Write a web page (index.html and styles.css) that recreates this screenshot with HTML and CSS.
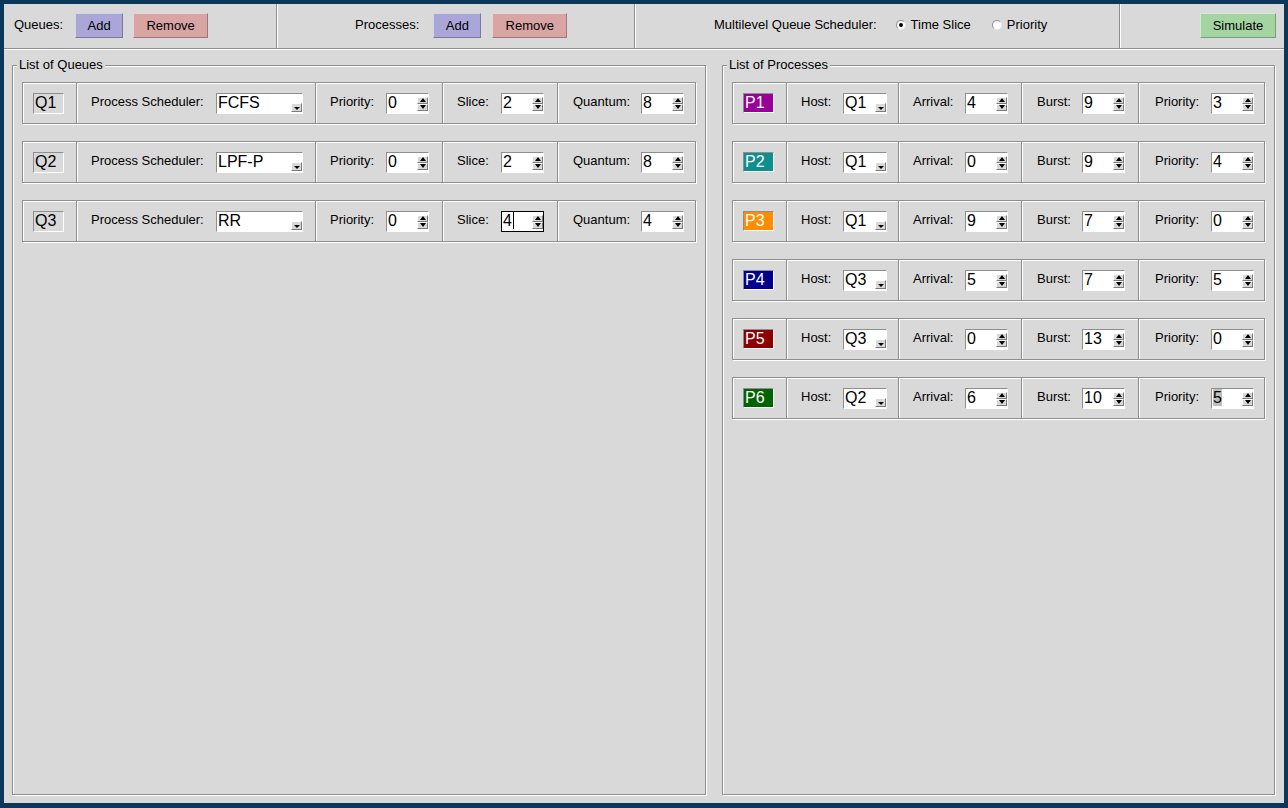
FILE: index.html
```html
<!DOCTYPE html>
<html>
<head>
<meta charset="utf-8">
<title>Multilevel Queue Scheduler</title>
<link rel="stylesheet" href="styles.css">
</head>
<body>
<div class="window">
  <div class="toolbar">
    <div class="tsec s1"><span class="tl">Queues:</span><button class="btn add">Add</button><button class="btn remove">Remove</button></div>
    <div class="tsec s2"><span class="tl">Processes:</span><button class="btn add">Add</button><button class="btn remove">Remove</button></div>
    <div class="tsec s3"><span class="tl">Multilevel Queue Scheduler:</span><label class="radio r1"><span class="rdot on"></span>Time Slice</label><label class="radio r2"><span class="rdot"></span>Priority</label></div>
    <div class="tsec s4"><button class="btn sim">Simulate</button></div>
  </div>
  <div class="main">
    <fieldset class="group gq">
      <legend>List of Queues</legend>
      <div class="rows">
        <div class="row qrow">
          <div class="cell c1"><span class="tag">Q1</span></div>
          <div class="cell qc2"><span class="lbl">Process Scheduler:</span><span class="entry combo"><span class="val">FCFS</span><span class="drop"></span></span></div>
          <div class="cell qc3"><span class="lbl">Priority:</span><span class="entry spin"><span class="val">0</span><span class="arrows"><span class="ab up"></span><span class="ab dn"></span></span></span></div>
          <div class="cell qc4"><span class="lbl">Slice:</span><span class="entry spin"><span class="val">2</span><span class="arrows"><span class="ab up"></span><span class="ab dn"></span></span></span></div>
          <div class="cell qc5"><span class="lbl">Quantum:</span><span class="entry spin"><span class="val">8</span><span class="arrows"><span class="ab up"></span><span class="ab dn"></span></span></span></div>
        </div>
        <div class="row qrow">
          <div class="cell c1"><span class="tag">Q2</span></div>
          <div class="cell qc2"><span class="lbl">Process Scheduler:</span><span class="entry combo"><span class="val">LPF-P</span><span class="drop"></span></span></div>
          <div class="cell qc3"><span class="lbl">Priority:</span><span class="entry spin"><span class="val">0</span><span class="arrows"><span class="ab up"></span><span class="ab dn"></span></span></span></div>
          <div class="cell qc4"><span class="lbl">Slice:</span><span class="entry spin"><span class="val">2</span><span class="arrows"><span class="ab up"></span><span class="ab dn"></span></span></span></div>
          <div class="cell qc5"><span class="lbl">Quantum:</span><span class="entry spin"><span class="val">8</span><span class="arrows"><span class="ab up"></span><span class="ab dn"></span></span></span></div>
        </div>
        <div class="row qrow">
          <div class="cell c1"><span class="tag">Q3</span></div>
          <div class="cell qc2"><span class="lbl">Process Scheduler:</span><span class="entry combo"><span class="val">RR</span><span class="drop"></span></span></div>
          <div class="cell qc3"><span class="lbl">Priority:</span><span class="entry spin"><span class="val">0</span><span class="arrows"><span class="ab up"></span><span class="ab dn"></span></span></span></div>
          <div class="cell qc4"><span class="lbl">Slice:</span><span class="entry spin focus"><span class="val">4<span class="caret"></span></span><span class="arrows"><span class="ab up"></span><span class="ab dn"></span></span></span></div>
          <div class="cell qc5"><span class="lbl">Quantum:</span><span class="entry spin"><span class="val">4</span><span class="arrows"><span class="ab up"></span><span class="ab dn"></span></span></span></div>
        </div>
      </div>
    </fieldset>
    <fieldset class="group gp">
      <legend>List of Processes</legend>
      <div class="rows">
        <div class="row prow">
          <div class="cell c1"><span class="tag ptag p1">P1</span></div>
          <div class="cell pc2"><span class="lbl">Host:</span><span class="entry combo small"><span class="val">Q1</span><span class="drop"></span></span></div>
          <div class="cell pc3"><span class="lbl">Arrival:</span><span class="entry spin"><span class="val">4</span><span class="arrows"><span class="ab up"></span><span class="ab dn"></span></span></span></div>
          <div class="cell pc4"><span class="lbl">Burst:</span><span class="entry spin"><span class="val">9</span><span class="arrows"><span class="ab up"></span><span class="ab dn"></span></span></span></div>
          <div class="cell pc5"><span class="lbl">Priority:</span><span class="entry spin"><span class="val">3</span><span class="arrows"><span class="ab up"></span><span class="ab dn"></span></span></span></div>
        </div>
        <div class="row prow">
          <div class="cell c1"><span class="tag ptag p2">P2</span></div>
          <div class="cell pc2"><span class="lbl">Host:</span><span class="entry combo small"><span class="val">Q1</span><span class="drop"></span></span></div>
          <div class="cell pc3"><span class="lbl">Arrival:</span><span class="entry spin"><span class="val">0</span><span class="arrows"><span class="ab up"></span><span class="ab dn"></span></span></span></div>
          <div class="cell pc4"><span class="lbl">Burst:</span><span class="entry spin"><span class="val">9</span><span class="arrows"><span class="ab up"></span><span class="ab dn"></span></span></span></div>
          <div class="cell pc5"><span class="lbl">Priority:</span><span class="entry spin"><span class="val">4</span><span class="arrows"><span class="ab up"></span><span class="ab dn"></span></span></span></div>
        </div>
        <div class="row prow">
          <div class="cell c1"><span class="tag ptag p3">P3</span></div>
          <div class="cell pc2"><span class="lbl">Host:</span><span class="entry combo small"><span class="val">Q1</span><span class="drop"></span></span></div>
          <div class="cell pc3"><span class="lbl">Arrival:</span><span class="entry spin"><span class="val">9</span><span class="arrows"><span class="ab up"></span><span class="ab dn"></span></span></span></div>
          <div class="cell pc4"><span class="lbl">Burst:</span><span class="entry spin"><span class="val">7</span><span class="arrows"><span class="ab up"></span><span class="ab dn"></span></span></span></div>
          <div class="cell pc5"><span class="lbl">Priority:</span><span class="entry spin"><span class="val">0</span><span class="arrows"><span class="ab up"></span><span class="ab dn"></span></span></span></div>
        </div>
        <div class="row prow">
          <div class="cell c1"><span class="tag ptag p4">P4</span></div>
          <div class="cell pc2"><span class="lbl">Host:</span><span class="entry combo small"><span class="val">Q3</span><span class="drop"></span></span></div>
          <div class="cell pc3"><span class="lbl">Arrival:</span><span class="entry spin"><span class="val">5</span><span class="arrows"><span class="ab up"></span><span class="ab dn"></span></span></span></div>
          <div class="cell pc4"><span class="lbl">Burst:</span><span class="entry spin"><span class="val">7</span><span class="arrows"><span class="ab up"></span><span class="ab dn"></span></span></span></div>
          <div class="cell pc5"><span class="lbl">Priority:</span><span class="entry spin"><span class="val">5</span><span class="arrows"><span class="ab up"></span><span class="ab dn"></span></span></span></div>
        </div>
        <div class="row prow">
          <div class="cell c1"><span class="tag ptag p5">P5</span></div>
          <div class="cell pc2"><span class="lbl">Host:</span><span class="entry combo small"><span class="val">Q3</span><span class="drop"></span></span></div>
          <div class="cell pc3"><span class="lbl">Arrival:</span><span class="entry spin"><span class="val">0</span><span class="arrows"><span class="ab up"></span><span class="ab dn"></span></span></span></div>
          <div class="cell pc4"><span class="lbl">Burst:</span><span class="entry spin"><span class="val">13</span><span class="arrows"><span class="ab up"></span><span class="ab dn"></span></span></span></div>
          <div class="cell pc5"><span class="lbl">Priority:</span><span class="entry spin"><span class="val">0</span><span class="arrows"><span class="ab up"></span><span class="ab dn"></span></span></span></div>
        </div>
        <div class="row prow">
          <div class="cell c1"><span class="tag ptag p6">P6</span></div>
          <div class="cell pc2"><span class="lbl">Host:</span><span class="entry combo small"><span class="val">Q2</span><span class="drop"></span></span></div>
          <div class="cell pc3"><span class="lbl">Arrival:</span><span class="entry spin"><span class="val">6</span><span class="arrows"><span class="ab up"></span><span class="ab dn"></span></span></span></div>
          <div class="cell pc4"><span class="lbl">Burst:</span><span class="entry spin"><span class="val">10</span><span class="arrows"><span class="ab up"></span><span class="ab dn"></span></span></span></div>
          <div class="cell pc5"><span class="lbl">Priority:</span><span class="entry spin"><span class="val"><span class="sel">5</span></span><span class="arrows"><span class="ab up"></span><span class="ab dn"></span></span></span></div>
        </div>
      </div>
    </fieldset>
  </div>
</div>
</body>
</html>
```

FILE: styles.css
```css
* { box-sizing: border-box; }
html, body { margin: 0; padding: 0; }
body {
  width: 1288px;
  height: 808px;
  overflow: hidden;
  background: #0b375a;
  font-family: "Liberation Sans", Arial, Helvetica, sans-serif;
  font-size: 13px;
  color: #000;
}
.window {
  margin: 4px 0 0 4px;
  width: 1280px;
  height: 799px;
  background: #d9d9d9;
  display: flex;
  flex-direction: column;
}

/* toolbar */
.toolbar {
  height: 45px;
  flex: none;
  display: flex;
  border-bottom: 1px solid #8e8e8e;
}
.tsec { display: flex; align-items: flex-start; height: 100%; }
.tsec + .tsec { border-left: 1px solid #fff; }
.tsec:not(:last-child) { border-right: 1px solid #8e8e8e; }
.tl { margin-top: 13px; line-height: 15px; }
.s1 { width: 273px; padding-left: 10px; }
.s2 { width: 358px; padding-left: 77px; }
.s3 { width: 485px; padding-left: 78px; }
.s4 { width: 164px; justify-content: flex-end; padding-right: 8px; }
.s1 .add { margin-left: 12px; }
.s1 .remove { margin-left: 10px; }
.s2 .add { margin-left: 14px; }
.s2 .remove { margin-left: 11px; }

.btn {
  font-family: "Liberation Sans", Arial, Helvetica, sans-serif;
  font-size: 13px;
  height: 25px;
  margin-top: 9px;
  padding: 0;
  color: #000;
  border: 1px solid;
}
.add { width: 48px; background: #aaa6d8; border-color: #d4d2ee #7b789e #7b789e #d4d2ee; }
.remove { width: 75px; background: #d9a4a4; border-color: #eed2d2 #9e7777 #9e7777 #eed2d2; }
.sim { width: 76px; background: #a4d4a2; border-color: #d2ecd2 #77a077 #77a077 #d2ecd2; }

.radio { display: flex; align-items: center; gap: 5px; margin-top: 13px; line-height: 15px; }
.r1 { margin-left: 19px; }
.r2 { margin-left: 21px; }
.rdot {
  width: 10px;
  height: 10px;
  border-radius: 50%;
  background: #fff;
  border: 1px solid;
  border-color: #8e8e8e #e6e6e6 #e6e6e6 #8e8e8e;
  display: flex;
  align-items: center;
  justify-content: center;
}
.rdot.on::before {
  content: "";
  width: 4px;
  height: 4px;
  border-radius: 50%;
  background: #000;
}

/* main area */
.main {
  flex: 1;
  display: flex;
  gap: 16px;
  padding: 8px 9px 8px 8px;
  border-top: 1px solid #fff;
}
.group {
  margin: 0;
  padding: 0;
  min-width: 0;
  flex: none;
  border: 1px solid #8e8e8e;
  box-shadow: inset 1px 1px 0 #fff, 1px 1px 0 #fff;
}
.gq { width: 694px; }
.gp { width: 553px; }
.group legend {
  margin-left: 4px;
  padding: 0 2px;
  font-size: 13px;
  line-height: 14px;
  background: #d9d9d9;
}
.rows {
  display: flex;
  flex-direction: column;
  gap: 17px;
  padding: 10px 9px 0 9px;
}
.row {
  display: flex;
  height: 42px;
  border: 1px solid #8e8e8e;
  box-shadow: inset 1px 1px 0 #fff, 1px 1px 0 #fff;
}
.qrow { width: 674px; }
.prow { width: 533px; }
.cell {
  display: flex;
  align-items: flex-start;
  justify-content: space-between;
  height: 100%;
  padding: 0 11px 0 13px;
}
.cell + .cell { border-left: 1px solid #fff; }
.cell:not(:last-child) { border-right: 1px solid #8e8e8e; }
.lbl { margin-top: 11px; line-height: 15px; }
.c1 { width: 54px; padding: 0 0 0 10px; justify-content: flex-start; }
.qc2 { width: 239px; padding-right: 12px; }
.qc3 { width: 127px; padding-right: 13px; }
.qc4 { width: 115px; padding-right: 13px; }
.qc5 { width: 137px; padding-left: 14px; padding-right: 11px; }
.pc2 { width: 112px; }
.pc3 { width: 123px; padding-right: 13px; }
.pc4 { width: 117px; padding-left: 14px; padding-right: 13px; }
.pc5 { width: 125px; padding-left: 15px; padding-right: 10px; }

.tag {
  margin-top: 10px;
  width: 31px;
  height: 21px;
  border: 1px solid;
  border-color: #8e8e8e #fff #fff #8e8e8e;
  font-size: 16px;
  line-height: 17px;
  padding-left: 1px;
}
.ptag { color: #fff; height: 20px; line-height: 17px; }
.p1 { background: #990099; }
.p2 { background: #0e8f8f; }
.p3 { background: #ff8c00; }
.p4 { background: #00008b; }
.p5 { background: #8b0000; }
.p6 { background: #006400; }

.entry {
  margin-top: 10px;
  display: flex;
  justify-content: space-between;
  height: 21px;
  background: #fff;
  border: 1px solid;
  border-color: #8e8e8e #fff #fff #8e8e8e;
  font-size: 16px;
  line-height: 17px;
}
.val { padding-left: 1px; display: flex; align-items: flex-start; align-self: flex-start; }
.spin { width: 43px; }
.combo { width: 87px; }
.combo.small { width: 44px; }
.focus { border-color: #000; }
.caret { display: inline-block; width: 1px; height: 17px; background: #000; margin-left: 1px; }
.sel { background: #c0c0c0; }

.arrows {
  display: flex;
  flex-direction: column;
  align-self: center;
  width: 11px;
}
.ab {
  display: flex;
  align-items: center;
  justify-content: center;
  height: 7px;
  background: #d9d9d9;
  border: 1px solid;
  border-color: #fff #7a7a7a #7a7a7a #fff;
}
.ab::before {
  content: "";
  border-left: 3px solid transparent;
  border-right: 3px solid transparent;
}
.up::before { border-bottom: 4px solid #000; }
.dn::before { border-top: 4px solid #000; }

.drop {
  align-self: flex-end;
  width: 11px;
  height: 9px;
  margin-bottom: 1px;
  background: #d9d9d9;
  border: 1px solid;
  border-color: #fff #7a7a7a #7a7a7a #fff;
  display: flex;
  align-items: flex-end;
  justify-content: center;
  padding-bottom: 1px;
}
.drop::before {
  content: "";
  border-left: 3px solid transparent;
  border-right: 3px solid transparent;
  border-top: 3px solid #000;
}
```
